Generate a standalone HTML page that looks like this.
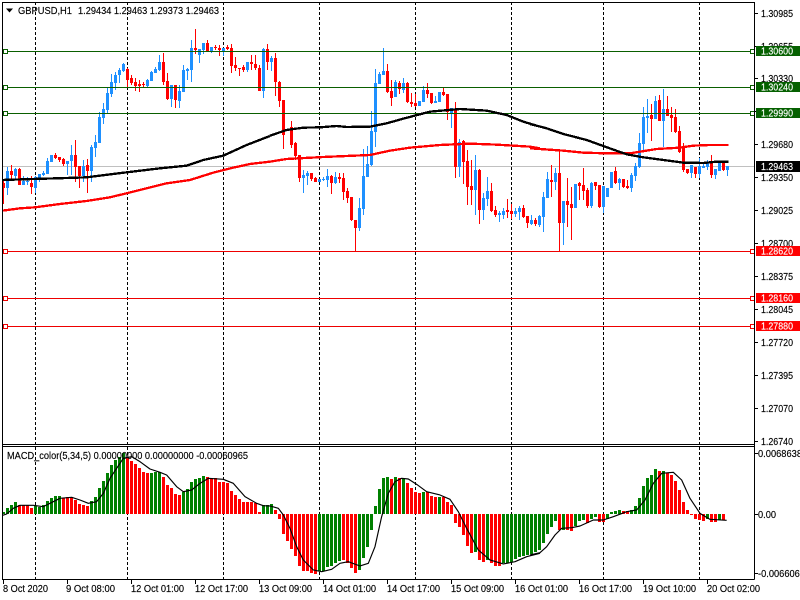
<!DOCTYPE html>
<html><head><meta charset="utf-8"><title>GBPUSD,H1</title>
<style>
html,body{margin:0;padding:0;background:#fff;width:800px;height:600px;overflow:hidden}
svg{display:block}
text{font-family:"Liberation Sans",sans-serif;font-size:10.5px;fill:#000;stroke:#000;stroke-width:.15px}
text.w{fill:#fff;stroke:#fff}
</style></head><body>
<svg width="800" height="600" viewBox="0 0 800 600" xmlns="http://www.w3.org/2000/svg">
<rect width="800" height="600" fill="#fff"/>
<!-- grid -->
<g stroke="#000" stroke-width="1" stroke-dasharray="3 2" fill="none" shape-rendering="crispEdges">
<path d="M35.5 2V444M127.5 2V444M223.5 2V444M319.5 2V444M415.5 2V444M511.5 2V444M603.5 2V444M699.5 2V444"/>
<path d="M35.5 447V579M127.5 447V579M223.5 447V579M319.5 447V579M415.5 447V579M511.5 447V579M603.5 447V579M699.5 447V579"/>
</g>
<path d="M3 166.5H754" stroke="#c0c0c0" stroke-width="1" shape-rendering="crispEdges"/>
<!-- candles -->
<g transform="translate(.5,0)" fill="none" shape-rendering="crispEdges">
<path stroke="#1e90ff" stroke-width="1" d="M7 167V195M15 168V180M23 176V185M27 177V185M35 176V193M39 174V182M43 171V176M47 158V174M51 155V162M67 161V175M71 145V175M83 160V182M91 145V182M95 135V157M99 112V143M103 103V124M107 87V113M111 74V97M115 72V90M119 68V83M123 63V72M147 79V87M151 71V81M155 67V73M159 55V71M171 85V107M179 85V108M183 65V92M187 68V80M191 40V82M199 49V63M203 43V54M211 47V53M223 48V56M247 62V72M263 48V98M271 56V71M303 170V193M307 171V185M319 179V182M323 177V181M327 169V187M335 172V184M359 198V231M363 149V215M367 146V177M371 111V166M375 69V147M379 72V84M383 48V75M395 80V97M403 78V93M419 101V106M423 86V102M435 96V103M439 92V102M451 108V128M459 139V177M475 155V215M483 193V220M487 177V206M499 211V222M503 208V219M515 208V217M519 206V220M531 215V225M539 215V227M543 192V232M547 172V198M555 168V190M563 201V245M575 184V208M591 182V208M603 186V213M607 188V197M611 172V188M619 178V190M631 173V192M635 163V181M639 133V168M643 107V150M647 99V133M655 96V119M663 89V147M691 165V178M699 158V178M703 162V168M707 160V170M715 169V179M719 162V171M727 166V176"/>
<path stroke="#1e90ff" stroke-width="3" d="M7 171V188M15 169V176M23 181V185M27 181V182M35 177V188M39 174V178M43 173V175M47 161V174M51 155V162M67 161V164M71 155V161M83 166V176M91 147V171M95 142V148M99 117V143M103 109V118M107 93V110M111 82V94M115 75V83M119 70V75M123 64V71M147 80V86M151 72V81M155 69V73M159 62V70M171 85V99M179 91V101M183 70V92M187 69V71M191 48V70M199 49V55M203 43V50M211 47V51M223 48V52M247 62V70M263 49V91M271 58V62M303 175V178M307 173V176M319 179V182M323 179V180M327 176V180M335 177V183M359 208V228M363 176V209M367 164V177M371 131V165M375 83V132M379 74V84M383 71V75M395 82V97M403 83V90M419 101V106M423 90V102M435 101V103M439 92V102M451 108V113M459 142V167M475 170V190M483 198V210M487 191V199M499 213V215M503 211V215M515 211V214M519 208V212M531 220V224M539 216V225M543 197V217M547 179V198M555 173V182M563 201V223M575 184V208M591 183V206M603 186V207M607 188V197M611 172V188M619 179V183M631 175V188M635 166V176M639 143V167M643 117V144M647 116V118M655 101V119M663 109V121M691 165V173M699 166V174M703 166V168M707 163V167M715 169V175M719 162V171M727 166V170"/>
<path stroke="#ff0000" stroke-width="1" d="M3 180V204M11 165V180M19 168V185M31 176V194M55 153V159M59 157V162M63 158V166M75 140V182M79 166V188M87 159V193M127 68V87M131 75V85M135 78V91M139 80V92M143 82V88M163 53V85M167 73V100M175 85V108M195 29V54M207 40V52M215 45V50M219 45V56M227 45V50M231 44V73M235 57V71M239 68V76M243 65V72M251 55V70M255 55V70M259 65V91M267 44V70M275 53V96M279 81V107M283 100V149M291 121V148M295 142V160M299 155V182M311 173V181M315 177V182M331 175V194M339 173V183M343 173V200M347 188V203M351 197V221M355 220V252M387 64V93M391 80V106M399 81V94M407 82V103M411 93V107M415 94V107M427 83V98M431 93V104M443 88V96M447 94V120M455 102V178M463 140V184M467 150V205M471 160V205M479 169V224M491 183V212M495 206V217M507 199V218M511 204V219M523 205V218M527 216V228M535 218V226M551 165V197M559 150V252M567 178V227M571 187V240M579 182V200M583 168V200M587 188V208M595 182V190M599 185V208M615 167V184M623 179V188M627 180V189M651 104V141M659 95V121M667 96V116M671 107V132M675 109V133M679 126V153M683 143V172M687 169V174M695 167V178M711 155V178M723 162V171"/>
<path stroke="#ff0000" stroke-width="3" d="M3 183V188M11 171V175M19 169V185M31 183V187M55 155V158M59 157V160M63 159V164M75 155V167M79 166V176M87 165V171M127 69V80M131 78V83M135 82V86M139 84V86M143 84V85M163 62V82M167 81V99M175 85V100M195 48V50M207 43V52M215 47V48M219 48V50M227 47V49M231 48V66M235 65V68M239 68V69M243 67V70M251 62V64M255 64V68M259 68V91M267 49V62M275 58V82M279 82V101M283 100V135M291 127V145M295 143V156M299 155V178M311 173V179M315 178V182M331 176V183M339 177V179M343 178V192M347 191V198M351 197V220M355 220V228M387 71V92M391 91V98M399 83V89M407 83V102M411 102V104M415 103V106M427 90V94M431 93V103M443 92V95M447 94V112M455 110V167M463 141V162M467 161V187M471 186V190M479 170V210M491 191V211M495 210V215M507 210V212M511 211V214M523 208V217M527 216V223M535 220V224M551 180V182M559 173V223M567 201V205M571 204V208M579 183V186M583 185V191M587 190V206M595 182V186M599 185V207M615 171V183M623 179V187M627 186V188M651 115V119M659 100V121M667 109V116M671 115V118M675 117V132M679 131V152M683 148V170M687 169V173M695 167V174M711 163V175M723 163V170"/>
</g>
<!-- horizontal lines -->
<g fill="none" shape-rendering="crispEdges">
<path stroke="#0a5f00" d="M3 51.5H750M3 87.5H750M3 113.5H750"/>
<path stroke="#ee0000" d="M3 251.5H750M3 298.5H750M3 326.5H750"/>
<g stroke="#0a5f00" fill="#fff">
<rect x="3.5" y="49.5" width="4" height="4"/><rect x="3.5" y="85.5" width="4" height="4"/><rect x="3.5" y="111.5" width="4" height="4"/>
<rect x="750.5" y="49.5" width="4" height="4"/><rect x="750.5" y="85.5" width="4" height="4"/><rect x="750.5" y="111.5" width="4" height="4"/>
</g>
<g stroke="#ee0000" fill="#fff">
<rect x="3.5" y="249.5" width="4" height="4"/><rect x="3.5" y="296.5" width="4" height="4"/><rect x="3.5" y="324.5" width="4" height="4"/>
<rect x="750.5" y="249.5" width="4" height="4"/><rect x="750.5" y="296.5" width="4" height="4"/><rect x="750.5" y="324.5" width="4" height="4"/>
</g>
</g>
<!-- moving averages -->
<g fill="none" stroke-linejoin="round" shape-rendering="crispEdges">
<g stroke="#ff0000" stroke-width="7">
<polyline transform="scale(.3333)" points="8,632 60,625 105,622 180,612 260,603 330,592 400,575 500,550 570,540 640,518 700,503 750,492 810,485"/>
<polyline transform="translate(270,20) scale(.3333)" points="0,425 50,417 160,411 300,405 360,392 420,383 510,375 600,371 680,374 780,380 810,385"/>
<polyline transform="translate(530,0) scale(.3333)" points="0,445 100,452 160,458 230,460 300,460 380,447 450,443 490,437 540,435 595,435"/>
</g>
<g stroke="#000" stroke-width="7">
<polyline transform="scale(.3333)" points="8,540 100,537 170,535 260,532 340,522 380,517 480,505 560,497 610,480 670,467 740,435 810,408"/>
<polyline transform="translate(270,20) scale(.3333)" points="0,347 50,330 100,323 150,322 200,318 230,321 300,320 350,310 400,296 480,275 570,267 650,272 710,285 760,305 810,320"/>
<polyline transform="translate(530,0) scale(.3333)" points="0,372 50,385 100,402 170,420 225,440 290,463 340,472 400,480 460,488 520,489 560,485 595,485"/>
</g>
</g>
<!-- histogram -->
<g transform="translate(.5,0)" fill="none" stroke-width="3" shape-rendering="crispEdges">
<path stroke="#008000" d="M3 514V512M7 514V508M11 514V505M15 514V502M35 514V506M39 514V507M43 514V505M47 514V501M51 514V498M55 514V496M59 514V496M91 514V501M95 514V497M99 514V488M103 514V481M107 514V473M111 514V465M115 514V460M119 514V457M123 514V453M151 514V473M155 514V472M159 514V472M183 514V492M187 514V489M191 514V482M195 514V479M199 514V478M203 514V476M263 514V505M267 514V505M271 514V504M375 514V506M379 514V489M383 514V478M387 514V477M395 514V477M403 514V479M423 514V492M439 514V497M611 514V512M615 514V511M619 514V510M631 514V510M635 514V506M639 514V498M643 514V486M647 514V478M651 514V475M655 514V469M663 514V471M319 514V571M323 514V571M327 514V567M331 514V566M335 514V563M339 514V561M359 514V570M363 514V558M367 514V547M371 514V530M475 514V552M487 514V560M503 514V563M507 514V563M511 514V562M515 514V559M519 514V557M523 514V556M527 514V555M531 514V554M535 514V552M539 514V550M543 514V543M547 514V534M551 514V527M555 514V521M563 514V530M575 514V526M579 514V521M583 514V520M591 514V519M595 514V517M607 514V519M707 514V519M719 514V520"/>
<path stroke="#ff0000" d="M19 514V505M23 514V505M27 514V505M31 514V508M63 514V498M67 514V497M71 514V497M75 514V500M79 514V504M83 514V505M87 514V506M127 514V458M131 514V461M135 514V464M139 514V468M143 514V472M147 514V473M163 514V477M167 514V485M171 514V488M175 514V494M179 514V495M207 514V477M211 514V478M215 514V478M219 514V482M223 514V482M227 514V483M231 514V491M235 514V495M239 514V499M243 514V502M247 514V502M251 514V502M255 514V503M259 514V512M275 514V510M391 514V479M399 514V478M407 514V483M411 514V488M415 514V492M419 514V493M427 514V492M431 514V496M435 514V497M443 514V497M447 514V502M451 514V505M623 514V511M627 514V511M659 514V471M667 514V473M671 514V475M675 514V481M679 514V490M683 514V502M687 514V510M279 514V519M283 514V534M287 514V541M291 514V549M295 514V556M299 514V566M303 514V571M307 514V571M311 514V573M315 514V574M343 514V560M347 514V563M351 514V568M355 514V573M455 514V523M459 514V527M463 514V535M467 514V546M471 514V553M479 514V560M483 514V562M491 514V563M495 514V566M499 514V566M559 514V530M567 514V530M571 514V531M587 514V523M599 514V522M603 514V522M691 514V515M695 514V519M699 514V520M703 514V521M711 514V522M715 514V522M723 514V520"/>
</g>
<!-- signal line -->
<g fill="none" stroke="#000" stroke-width="3.5" stroke-linejoin="round">
<polyline transform="translate(0,440) scale(.3333)" points="8,226 20,222 40,205 60,196 100,196 130,200 150,190 180,175 215,172 240,180 265,190 290,185 310,160 330,115 350,85 370,55 395,50 420,65 450,87 480,97 500,105 530,140 550,155 575,150 600,130 625,115 670,118 700,130 735,170 770,190 790,197 810,198"/>
<polyline transform="translate(270,440) scale(.3333)" points="0,198 25,205 40,225 60,265 80,320 100,360 130,390 155,395 185,388 210,370 235,365 270,378 295,370 315,320 335,230 355,160 375,125 395,115 415,117 440,133 470,155 510,165 540,178 565,215 590,265 625,330 660,360 700,372 735,365 770,350 810,340"/>
<polyline transform="translate(530,440) scale(.3333)" points="0,345 30,338 50,320 75,285 95,265 125,263 150,258 190,240 220,240 250,230 290,215 320,210 345,180 370,130 395,100 430,97 455,120 480,175 510,220 540,238 590,241"/>
</g>
<!-- frame & ticks -->
<g fill="none" stroke="#000" shape-rendering="crispEdges">
<path d="M2.5 2V579.5M2 2.5H754.5M754.5 2V579.5M2 444.5H754.5M2 446.5H754.5M2 579.5H754.5"/>
<path d="M755 13.5H758M755 46.5H758M755 78.5H758M755 111.5H758M755 144.5H758M755 177.5H758M755 210.5H758M755 243.5H758M755 276.5H758M755 309.5H758M755 342.5H758M755 375.5H758M755 408.5H758M755 441.5H758M755 453.5H758M755 514.5H758M755 573.5H758"/>
<path d="M3.5 580V584M67.5 580V584M131.5 580V584M195.5 580V584M259.5 580V584M323.5 580V584M387.5 580V584M451.5 580V584M515.5 580V584M579.5 580V584M643.5 580V584M707.5 580V584"/>
</g>
<!-- header -->
<path d="M6 8.5H13L9.5 12.5Z" fill="#000"/>
<text x="18" y="14" textLength="54" lengthAdjust="spacingAndGlyphs">GBPUSD,H1</text>
<text x="78" y="14" textLength="141" lengthAdjust="spacingAndGlyphs">1.29434 1.29463 1.29373 1.29463</text>
<text x="7" y="459" textLength="241" lengthAdjust="spacingAndGlyphs">MACD_color(5,34,5) 0.00000000 0.00000000 -0.00060965</text>
<!-- price axis -->
<g>
<text x="761" y="17" textLength="32" lengthAdjust="spacingAndGlyphs">1.30985</text>
<text x="761" y="50" textLength="32" lengthAdjust="spacingAndGlyphs">1.30655</text>
<text x="761" y="82" textLength="32" lengthAdjust="spacingAndGlyphs">1.30330</text>
<text x="761" y="148" textLength="32" lengthAdjust="spacingAndGlyphs">1.29680</text>
<text x="761" y="181" textLength="32" lengthAdjust="spacingAndGlyphs">1.29350</text>
<text x="761" y="214" textLength="32" lengthAdjust="spacingAndGlyphs">1.29025</text>
<text x="761" y="247" textLength="32" lengthAdjust="spacingAndGlyphs">1.28700</text>
<text x="761" y="280" textLength="32" lengthAdjust="spacingAndGlyphs">1.28375</text>
<text x="761" y="313" textLength="32" lengthAdjust="spacingAndGlyphs">1.28045</text>
<text x="761" y="346" textLength="32" lengthAdjust="spacingAndGlyphs">1.27720</text>
<text x="761" y="379" textLength="32" lengthAdjust="spacingAndGlyphs">1.27395</text>
<text x="761" y="412" textLength="32" lengthAdjust="spacingAndGlyphs">1.27070</text>
<text x="761" y="445" textLength="32" lengthAdjust="spacingAndGlyphs">1.26740</text>
<text x="758" y="457" textLength="44" lengthAdjust="spacingAndGlyphs">0.0068638</text>
<text x="758" y="518" textLength="18" lengthAdjust="spacingAndGlyphs">0.00</text>
<text x="758" y="577" textLength="47" lengthAdjust="spacingAndGlyphs">-0.0066067</text>
</g>
<!-- price labels -->
<g shape-rendering="crispEdges">
<rect x="756" y="46" width="44" height="10" fill="#056000"/>
<rect x="756" y="82" width="44" height="10" fill="#056000"/>
<rect x="756" y="108" width="44" height="10" fill="#056000"/>
<rect x="756" y="161" width="44" height="11" fill="#000"/>
<rect x="756" y="246" width="44" height="10" fill="#ff0000"/>
<rect x="756" y="293" width="44" height="10" fill="#ff0000"/>
<rect x="756" y="321" width="44" height="10" fill="#ff0000"/>
</g>
<g>
<text class="w" x="761" y="54.5" textLength="32" lengthAdjust="spacingAndGlyphs">1.30600</text>
<text class="w" x="761" y="90.5" textLength="32" lengthAdjust="spacingAndGlyphs">1.30240</text>
<text class="w" x="761" y="116.5" textLength="32" lengthAdjust="spacingAndGlyphs">1.29990</text>
<text class="w" x="761" y="170" textLength="32" lengthAdjust="spacingAndGlyphs">1.29463</text>
<text class="w" x="761" y="254.5" textLength="32" lengthAdjust="spacingAndGlyphs">1.28620</text>
<text class="w" x="761" y="301.5" textLength="32" lengthAdjust="spacingAndGlyphs">1.28160</text>
<text class="w" x="761" y="329.5" textLength="32" lengthAdjust="spacingAndGlyphs">1.27880</text>
</g>
<!-- time axis -->
<g>
<text x="3" y="592" textLength="45" lengthAdjust="spacingAndGlyphs">8 Oct 2020</text>
<text x="66" y="592" textLength="49" lengthAdjust="spacingAndGlyphs">9 Oct 08:00</text>
<text x="131" y="592" textLength="53" lengthAdjust="spacingAndGlyphs">12 Oct 01:00</text>
<text x="195" y="592" textLength="53" lengthAdjust="spacingAndGlyphs">12 Oct 17:00</text>
<text x="259" y="592" textLength="53" lengthAdjust="spacingAndGlyphs">13 Oct 09:00</text>
<text x="323" y="592" textLength="53" lengthAdjust="spacingAndGlyphs">14 Oct 01:00</text>
<text x="387" y="592" textLength="53" lengthAdjust="spacingAndGlyphs">14 Oct 17:00</text>
<text x="451" y="592" textLength="53" lengthAdjust="spacingAndGlyphs">15 Oct 09:00</text>
<text x="515" y="592" textLength="53" lengthAdjust="spacingAndGlyphs">16 Oct 01:00</text>
<text x="579" y="592" textLength="53" lengthAdjust="spacingAndGlyphs">16 Oct 17:00</text>
<text x="643" y="592" textLength="53" lengthAdjust="spacingAndGlyphs">19 Oct 10:00</text>
<text x="707" y="592" textLength="53" lengthAdjust="spacingAndGlyphs">20 Oct 02:00</text>
</g>
</svg>
</body></html>
